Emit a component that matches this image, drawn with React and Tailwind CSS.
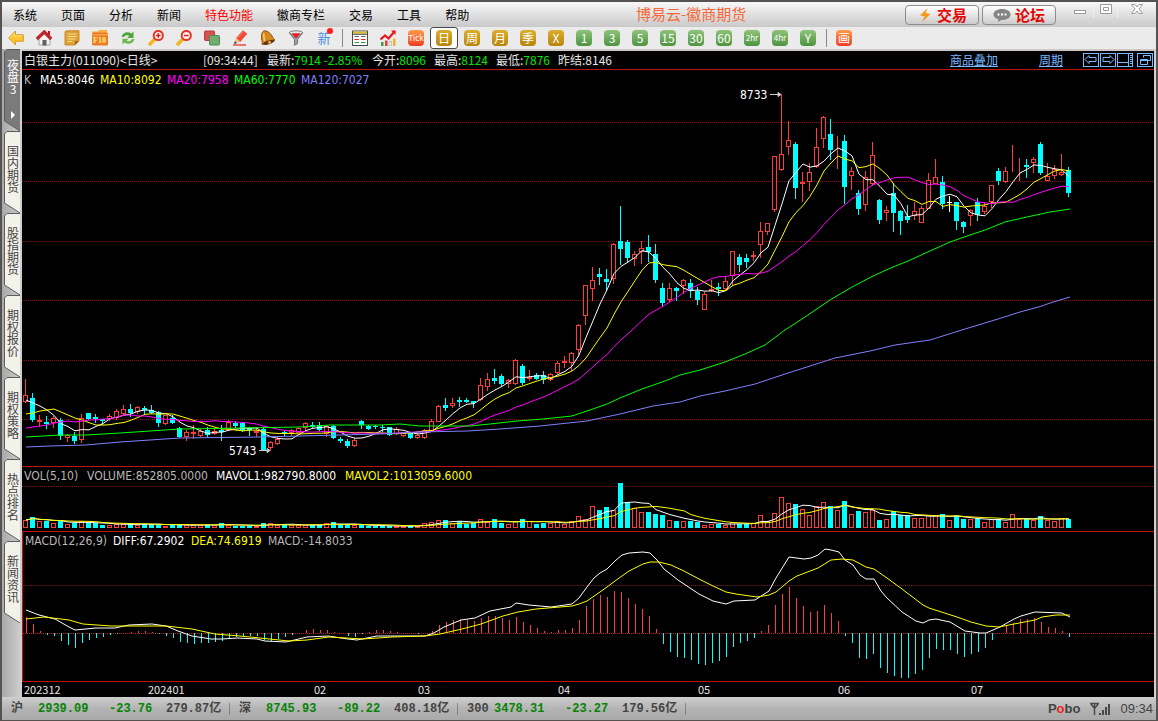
import React, { useState } from 'react';

const STEP = 7;
const FIRST_X = 25;

// [kind, high, bodyTop, bodyBottom, low] - kind: r = up, c = down, w = flat
const candles = [
  ['r', 379, 395, 401, 403], ['c', 393, 398, 420, 422], ['r', 415, 420, 421, 427], ['c', 416, 422, 424, 429], ['r', 416, 418, 422, 428],
  ['c', 418, 420, 436, 440], ['r', 434, 435, 437, 442], ['c', 432, 436, 441, 444], ['r', 414, 418, 439, 443], ['c', 413, 413, 419, 420],
  ['c', 414, 417, 419, 423], ['c', 419, 419, 421, 425], ['r', 414, 416, 418, 421], ['r', 409, 411, 417, 420], ['r', 405, 409, 413, 415],
  ['c', 404, 409, 413, 417], ['r', 406, 407, 411, 414], ['c', 406, 408, 410, 415], ['c', 405, 410, 413, 414], ['c', 411, 412, 423, 427],
  ['r', 415, 415, 423, 425], ['c', 415, 418, 423, 424], ['c', 427, 428, 437, 438], ['r', 430, 432, 436, 441], ['r', 425, 432, 433, 439],
  ['r', 429, 431, 435, 437], ['c', 427, 430, 435, 437], ['r', 429, 431, 433, 435], ['c', 425, 430, 432, 441], ['r', 420, 422, 429, 430],
  ['c', 421, 423, 426, 428], ['c', 422, 423, 431, 432], ['c', 427, 428, 430, 436], ['r', 427, 431, 432, 437], ['c', 427, 429, 450, 451],
  ['r', 441, 442, 447, 451], ['r', 437, 439, 443, 445], ['c', 431, 432, 433, 436], ['r', 429, 430, 432, 436], ['r', 427, 428, 432, 433],
  ['r', 422, 423, 427, 431], ['c', 422, 425, 427, 428], ['c', 422, 425, 430, 431], ['r', 425, 426, 433, 437], ['c', 425, 426, 438, 439],
  ['c', 437, 439, 441, 443], ['c', 439, 441, 446, 448], ['r', 438, 440, 445, 447], ['c', 420, 421, 425, 429], ['c', 425, 426, 429, 430],
  ['c', 425, 426, 427, 429], ['c', 425, 427, 428, 432], ['c', 427, 427, 435, 436], ['r', 427, 429, 433, 435], ['r', 433, 433, 435, 437],
  ['c', 433, 433, 438, 439], ['r', 433, 435, 437, 439], ['r', 429, 430, 437, 439], ['r', 419, 421, 430, 431], ['r', 405, 406, 421, 422],
  ['c', 398, 405, 408, 411], ['r', 398, 403, 405, 408], ['c', 397, 400, 402, 407], ['c', 398, 400, 402, 403], ['c', 401, 401, 403, 408],
  ['r', 378, 385, 399, 401], ['r', 373, 379, 386, 391], ['c', 369, 378, 381, 384], ['c', 374, 376, 384, 386], ['r', 379, 380, 383, 388],
  ['r', 359, 360, 383, 385], ['c', 364, 366, 383, 385], ['r', 370, 377, 378, 381], ['c', 373, 375, 379, 380], ['c', 371, 375, 380, 384],
  ['r', 373, 374, 379, 381], ['r', 361, 363, 372, 374], ['r', 356, 361, 362, 368], ['r', 352, 353, 362, 371], ['r', 324, 325, 349, 357],
  ['r', 285, 285, 315, 325], ['r', 267, 280, 288, 301], ['c', 268, 274, 277, 285], ['c', 269, 279, 282, 291], ['r', 243, 244, 278, 284],
  ['c', 206, 241, 249, 265], ['c', 240, 242, 258, 263], ['r', 251, 254, 258, 266], ['r', 241, 248, 251, 264], ['c', 235, 247, 252, 262],
  ['c', 244, 254, 280, 283], ['c', 283, 288, 303, 307], ['r', 283, 288, 299, 302], ['c', 287, 288, 291, 301], ['r', 279, 280, 285, 294],
  ['c', 279, 283, 291, 298], ['c', 287, 291, 300, 305], ['r', 292, 294, 309, 310], ['r', 280, 289, 290, 292], ['c', 283, 287, 289, 296],
  ['r', 276, 281, 288, 290], ['r', 251, 251, 275, 286], ['c', 254, 257, 265, 272], ['c', 254, 258, 262, 268], ['r', 251, 255, 256, 261],
  ['r', 222, 231, 244, 258], ['r', 223, 223, 231, 235], ['r', 156, 156, 209, 212], ['r', 94, 154, 169, 171], ['r', 121, 140, 146, 155],
  ['c', 142, 144, 188, 199], ['r', 172, 182, 183, 202], ['r', 163, 172, 181, 191], ['r', 128, 147, 166, 168], ['r', 116, 117, 138, 148],
  ['c', 119, 134, 150, 160], ['r', 136, 154, 154, 169], ['c', 135, 141, 187, 204], ['r', 167, 171, 175, 190], ['c', 190, 193, 209, 215],
  ['r', 171, 177, 204, 211], ['r', 142, 155, 183, 186], ['c', 199, 200, 220, 224], ['r', 206, 210, 212, 221], ['c', 183, 193, 213, 232],
  ['c', 210, 211, 221, 235], ['c', 205, 216, 220, 223], ['r', 202, 211, 215, 220], ['r', 206, 208, 222, 223], ['r', 173, 180, 208, 209],
  ['r', 159, 177, 183, 184], ['c', 176, 182, 204, 209], ['w', 196, 202, 203, 212], ['c', 202, 202, 221, 230], ['c', 221, 222, 227, 233],
  ['r', 209, 210, 215, 226], ['c', 198, 202, 215, 221], ['r', 202, 206, 211, 214], ['r', 185, 185, 201, 208], ['c', 168, 171, 181, 185],
  ['r', 167, 171, 181, 183], ['r', 145, 166, 166, 172], ['r', 158, 162, 162, 181], ['c', 159, 165, 167, 178], ['r', 157, 159, 162, 173],
  ['c', 142, 144, 173, 175], ['r', 163, 176, 180, 181], ['r', 165, 169, 175, 179], ['r', 154, 172, 174, 176], ['c', 167, 170, 193, 197],
];

const volumes = [
  7, 10, 6, 6, 4, 6, 3, 4, 6, 4, 4, 2, 2, 3, 3, 3, 2, 3, 3, 3, 1, 2, 2, 2, 2, 2, 2, 2, 4, 2,
  1, 1, 1, 1, 4, 4, 2, 2, 2, 2, 2, 2, 2, 4, 5, 2, 2, 2, 2, 1, 1, 1, 1, 1, 1, 1, 1, 4, 5, 7,
  7, 4, 6, 3, 4, 8, 5, 8, 4, 3, 6, 8, 6, 3, 4, 4, 6, 3, 6, 11, 8, 21, 17, 20, 17, 44, 25, 19, 15, 15,
  13, 12, 7, 6, 6, 6, 5, 2, 3, 3, 2, 5, 3, 3, 4, 12, 6, 14, 30, 24, 23, 18, 12, 21, 25, 21, 17, 26, 13, 16,
  15, 17, 7, 8, 16, 12, 12, 9, 9, 12, 12, 13, 7, 11, 8, 8, 8, 5, 8, 8, 5, 13, 8, 8, 7, 11, 7, 6, 9, 8,
];

const macd = [
  16, 9, 2, -2, -3, -8, -12, -15, -10, -7, -5, -4, -2, -1, 0, 1, 2, 2, 1, -1, -3, -5, -9, -10, -11, -10, -10, -9, -8, -5,
  -4, -3, -3, -3, -7, -8, -6, -4, -2, 0, 3, 4, 3, 3, 1, 0, -3, -4, -1, 1, 3, 3, 2, 1, 0, 0, -1, 0, 2, 8,
  11, 13, 14, 13, 12, 15, 17, 17, 15, 13, 16, 11, 8, 5, 2, 1, 3, 3, 5, 13, 27, 34, 38, 36, 42, 41, 35, 29, 24, 17,
  4, -11, -19, -24, -25, -27, -31, -32, -30, -28, -24, -14, -10, -8, -5, 2, 8, 28, 39, 46, 35, 27, 21, 22, 28, 20, 12, -3, -10, -25,
  -26, -21, -35, -40, -43, -45, -45, -41, -37, -25, -16, -17, -17, -21, -24, -21, -19, -15, -7, 0, 7, 10, 14, 14, 15, 11, 6, 5, 2, -4,
];

const ma60 =
  '26,437 60,435 86,435 120,433 150,431 180,429 240,428 300,427 330,425 380,425 400,424 420,426 470,426 490,424 517,421 543,419 572,416 587,411 607,404 620,398 642,389 665,381 680,375 700,370 725,362 745,354 765,345 785,330 802,319 830,300 852,287 873,276 893,267 908,261 930,251 950,242 970,235 985,230 1005,222 1027,217 1050,212 1070,209';
const ma120 =
  '26,447 50,446 86,445 120,442 150,440 180,438 260,437 300,436 340,435 380,434 420,432 467,431 500,429 540,426 587,421 620,414 653,406 680,402 700,396 725,391 755,384 785,374 810,366 835,358 870,351 895,345 930,340 965,329 998,319 1020,312 1042,306 1050,303 1070,297';
const diffLine =
  '26,610 39,615 55,619 69,627 75,630 96,628 115,628 129,625 152,624 166,626 178,631 192,636 211,639 222,639 237,638 257,639 265,641 286,642 307,637 328,636 348,639 357,640 377,636 425,636 434,633 444,627 461,620 475,618 490,611 511,607 516,603 529,605 551,607 572,604 579,598 587,587 594,578 600,573 607,569 615,561 622,555 629,553 643,552 650,553 657,560 664,569 678,580 684,584 699,594 713,601 726,604 734,601 755,600 769,591 776,578 789,557 804,559 811,558 818,555 825,549 831,550 839,552 845,560 853,565 860,575 866,579 874,579 881,591 887,598 902,612 916,621 923,623 929,620 936,619 950,622 965,631 980,633 986,633 1000,627 1014,619 1021,616 1035,612 1062,613 1070,617';
const deaLine =
  '26,619 44,617 69,620 83,624 111,626 166,626 192,629 215,634 240,636 289,641 307,640 329,637 363,639 392,637 425,636 440,634 462,629 481,624 503,616 518,612 536,609 572,606 579,604 587,601 600,592 607,587 615,581 629,571 643,564 650,562 659,562 671,565 684,571 699,579 713,586 726,592 736,594 757,597 769,595 776,592 789,581 797,576 818,568 831,560 842,559 853,560 866,567 874,569 887,578 902,589 923,605 929,608 957,617 971,622 986,626 999,627 1014,624 1035,620 1042,617 1056,615 1070,615';

// averages that depend on bars before the visible range
const seeds = {
  5: [400, 403, 406, 410],
  10: [414, 413, 411, 410, 409, 412, 415, 418, 420],
  20: [428, 427, 426, 425, 423, 422, 421, 422, 421, 420, 420, 419, 419, 417, 415, 415, 416, 416, 417],
};

const closes = candles.map((c) => (c[0] === 'c' ? c[3] : c[2]));

const average = (values, n, i) => {
  const part = values.slice(Math.max(0, i - n + 1), i + 1);
  return part.reduce((a, b) => a + b, 0) / part.length;
};

const maPoints = (n) =>
  closes.map((_, i) => `${FIRST_X + 1 + i * STEP},${seeds[n][i] ?? average(closes, n, i)}`).join(' ');

const volPoints = (n) =>
  volumes.map((_, i) => `${FIRST_X + 1 + i * STEP},${527 - average(volumes, n, i)}`).join(' ');

const kindColor = { r: '#ff3c3c', c: '#00ffff', w: '#ffffff' };

const GridLine = ({ y, color = '#8c0f0f' }) => (
  <line x1="0" x2="100%" y1={y + 0.5} y2={y + 0.5} stroke={color} strokeDasharray="1 1" shapeRendering="crispEdges" />
);

const Line = ({ points, color }) => <polyline points={points} fill="none" stroke={color} strokeWidth="1" />;

const Legend = ({ items, height }) => (
  <div className={`flex items-center pl-0.5 text-[12px] leading-4 whitespace-nowrap font-['DejaVu_Sans_Condensed','Noto_Sans',sans-serif] ${height}`}>
    {items.map(([text, color, width]) => (
      <span key={text} className={`${color} ${width}`}>
        {text}
      </span>
    ))}
  </div>
);

const PriceChart = () => (
  <svg className="block w-full h-[376px] overflow-visible">
    {[122, 181, 241, 300, 360, 419].map((y) => (
      <GridLine key={y} y={y - 90} />
    ))}
    <g transform="translate(-22 -90)">
      {candles.map(([kind, high, top, bottom, low], i) => {
        const x = FIRST_X + i * STEP;
        const color = kindColor[kind];
        return (
          <g key={i} shapeRendering="crispEdges" stroke={color}>
            <line x1={x + 0.5} x2={x + 0.5} y1={high} y2={low} />
            {kind === 'r' ? (
              <rect x={x - 1.5} y={top + 0.5} width="4" height={bottom - top} fill="#000000" />
            ) : (
              <rect x={x - 2} y={top} width="5" height={Math.max(1, bottom - top)} fill={color} stroke="none" />
            )}
          </g>
        );
      })}
      <Line points={maPoints(5)} color="#ffffff" />
      <Line points={maPoints(10)} color="#ffff00" />
      <Line points={maPoints(20)} color="#ff00ff" />
      <Line points={ma60} color="#00ff00" />
      <Line points={ma120} color="#8080ff" />
      <g className="fill-white text-[12px] font-['DejaVu_Sans_Condensed','Noto_Sans',sans-serif]">
        <text x="740" y="99">8733</text>
        <text x="229" y="455">5743</text>
      </g>
      <g stroke="#cccccc" fill="#cccccc">
        <path d="M770 94.5H781M778 92.5L781 94.5L778 96.5Z" />
        <path d="M259 450.5H270M267 448.5L270 450.5L267 452.5Z" />
      </g>
    </g>
  </svg>
);

const VolumeChart = () => (
  <svg className="block w-full h-[46px] overflow-visible">
    <GridLine y={1} />
    <g transform="translate(-22 -485)">
      {volumes.map((v, i) => {
        const x = FIRST_X + i * STEP;
        const up = candles[i][0] !== 'c';
        return up ? (
          <rect key={i} x={x - 1.5} y={527.5 - Math.max(v, 1)} width="4" height={Math.max(v, 1)} fill="#000000" stroke="#ff3c3c" shapeRendering="crispEdges" />
        ) : (
          <rect key={i} x={x - 2} y={527 - v} width="5" height={v + 1} fill="#00ffff" shapeRendering="crispEdges" />
        );
      })}
      <Line points={volPoints(5)} color="#ffffff" />
      <Line points={volPoints(10)} color="#ffff00" />
    </g>
  </svg>
);

const MacdChart = () => (
  <svg className="block w-full h-[131px] overflow-visible">
    <GridLine y={35} />
    <GridLine y={83} color="#d01010" />
    <g transform="translate(-23 -550)">
      {macd.map((m, i) => {
        const x = FIRST_X + 1.5 + i * STEP;
        return m === 0 ? null : (
          <line key={i} x1={x} x2={x} y1="633" y2={633 - m} stroke={m > 0 ? '#ff3c3c' : '#00ffff'} shapeRendering="crispEdges" />
        );
      })}
      <Line points={diffLine} color="#ffffff" />
      <Line points={deaLine} color="#ffff00" />
    </g>
  </svg>
);

/* Toolbar icons */
const Icon = ({ children }) => (
  <svg className="block w-4 h-4" viewBox="0 0 16 16" fill="none">
    {children}
  </svg>
);

const BackIcon = () => (
  <Icon>
    <path d="M.7 8L7.500 1v3.800h7.800v6.400H7.500V15z" fill="#fbc62f" stroke="#d9971c" />
    <path d="M2.500 7.800L6.500 3.500v2.500h7.800" stroke="#ffe58a" />
  </Icon>
);

const HomeIcon = () => (
  <Icon>
    <path d="M3 8v7h11V8L8.500 3z" fill="#f2f2f2" stroke="#a5a5a5" />
    <path d="M12 1h2v5h-2z" fill="#a81c22" />
    <path d="M.8 9L8.300 2l7 7" stroke="#c0262e" strokeWidth="3.400" />
    <path d="M6.500 10h4v5.500h-4z" fill="#5f6063" />
  </Icon>
);

const NoteIcon = () => (
  <Icon>
    <path d="M1 2.500C1 1.200 2 .8 3 .8h12v10L11 15H1z" fill="#dfa035" stroke="#cf8b22" />
    <path d="M3.500 4h9M3.500 6.500h9M3.500 9h8M3.500 11.500h5" stroke="#f9dc8f" />
    <path d="M11 15v-4h4z" fill="#a86a12" />
  </Icon>
);

const F10Icon = () => (
  <Icon>
    <path d="M0 3V1.500h6L7 0h8v3z" fill="#f5b23c" />
    <rect x="0" y="2.500" width="16" height="13" rx="1.500" fill="#ee7a27" />
    <path d="M0 4h16v1.500H0z" fill="#f9a04d" />
    <text x="1" y="12.500" className="fill-yellow-200 text-[8px] font-bold font-['Liberation_Serif',serif]">F10</text>
  </Icon>
);

const RefreshIcon = () => (
  <Icon>
    <path d="M1.500 7C2.500 2.500 7.500 1 11.500 3.500L13.500 1.500V8H7.200L9.300 5.800C7.300 4.700 5 5.200 4 7z" fill="#4ea63a" />
    <path d="M14.500 9c-1 4.500-6 6-10 3.500L2.500 14.500V8.800h6L6.700 10.700c2 1.100 4.300.5 5.300-1.700z" fill="#67ba4d" />
  </Icon>
);

const MagnifierIcon = ({ plus }) => (
  <Icon>
    <path d="M6.500 9.500L2 14" stroke="#f4b51d" strokeWidth="3.600" strokeLinecap="round" />
    <circle cx="10.300" cy="5.500" r="4.600" fill="#fff2ee" stroke="#e2372a" strokeWidth="2" />
    <path d="M8 5.500h4.600" stroke="#d3231c" strokeWidth="1.500" />
    {plus && <path d="M10.300 3.200v4.600" stroke="#d3231c" strokeWidth="1.500" />}
  </Icon>
);

const CopyIcon = () => (
  <Icon>
    <rect x=".5" y="1" width="10" height="9.500" rx="1" fill="#d8504e" stroke="#b93a3a" />
    <rect x="5.500" y="5.500" width="10" height="9.500" rx="1" fill="#6fae70" stroke="#4f8a52" />
  </Icon>
);

const PenIcon = () => (
  <Icon>
    <path d="M1 15h13" stroke="#e2372a" strokeWidth="1.300" />
    <path d="M4 8L11 .3l4.200 3.400L8.200 12z" fill="#ef4a34" />
    <path d="M5.500 8L11.500 1.500" stroke="#ff8a70" />
    <path d="M4 8l4.200 4L2 14z" fill="#efc28c" />
    <path d="M2 14l.9-2.700 2 1.800z" fill="#333333" />
  </Icon>
);

const BellIcon = () => (
  <Icon>
    <path d="M3 1.500C5-.5 9 2 11 4.500c1.500 2 1.500 3.500 4 5.500L2 14.500c1-3-1-5-.5-8C1.700 4 2 2.500 3 1.500z" fill="#d58a1f" stroke="#8c4f12" />
    <path d="M4 3.500C3 6 4.500 8.500 4.500 11" stroke="#ffd36b" strokeWidth="1.500" />
    <ellipse cx="8.800" cy="12.300" rx="6" ry="2" transform="rotate(-18 8.800 12.300)" fill="#6b3411" />
    <circle cx="9.500" cy="12.300" r="1.500" fill="#f0b044" />
  </Icon>
);

const FilterIcon = () => (
  <Icon>
    <path d="M1.500 3l5 6.500v5.700l3-1.500V9.500l5-6.500z" fill="#9da1a5" stroke="#6f7376" />
    <ellipse cx="8" cy="2.800" rx="6.700" ry="2" fill="#e6e6e6" stroke="#77797b" />
    <path d="M3.500 3.300h9L8.800 8H7.200z" fill="#de2527" />
  </Icon>
);

const NewIcon = () => (
  <span className="relative block text-[13px] leading-4 text-[#4a90e2]">
    新<span className="absolute -top-0.5 -right-0.5 w-1.5 h-1.5 rounded-full bg-[#ff1c1c]" />
  </span>
);

const TableIcon = () => (
  <Icon>
    <rect x=".5" y="1" width="15" height="14.500" fill="#ffffff" stroke="#4c4c4c" />
    <path d="M1 1.500h14v2.300H1z" fill="#d8c33a" />
    <path d="M1 4.300h14" stroke="#4c4c4c" />
    <path d="M2.500 6.500h4.500M9 6.500h4.500" stroke="#6d6d6d" />
    <path d="M2.500 9.500h4.500M9 9.500h4.500" stroke="#e22b2b" />
    <path d="M2.500 12.500h4.500M9 12.500h4.500" stroke="#2a9d3b" />
  </Icon>
);

const TrendIcon = () => (
  <Icon>
    <path d="M1 12h2.500v4H1z" fill="#3fa145" />
    <path d="M5 10.500h2.500V16H5z" fill="#d64532" />
    <path d="M9 11.500h2.500V16H9z" fill="#eeeeee" stroke="#999999" strokeWidth=".5" />
    <path d="M13 8.500h2.500V16H13z" fill="#f0b32d" />
    <path d="M.5 9.500L5 5.500l3.500 3L15 1" stroke="#e3191c" strokeWidth="2.200" />
    <path d="M11 .5h4.500V5z" fill="#e3191c" />
  </Icon>
);

const badgeStyles = {
  gold: 'from-[#dcae2c] to-[#b88508]',
  green: 'from-[#8fc37a] to-[#4c9440]',
  orange: 'from-[#ff9a4a] to-[#ee3a24]',
};

const Badge = ({ color, children, small }) => (
  <span className={`flex items-center justify-center w-4 h-4 rounded-sm bg-linear-to-b text-white leading-4 ${badgeStyles[color]} ${small ? 'text-[8px]' : 'text-[12px]'}`}>
    {children}
  </span>
);

const ToolButton = ({ label, children, active, onClick }) => (
  <button
    type="button"
    aria-label={label}
    onClick={onClick}
    className={`flex items-center justify-center w-7 h-[22px] shrink-0 ${active ? 'rounded-[3px] bg-white border border-[#4a4a4a]' : ''}`}
  >
    {children}
  </button>
);

const Separator = () => (
  <span className="flex justify-center w-2 shrink-0">
    <span className="w-px h-[18px] bg-[#8a8a8a]" />
  </span>
);

const leftTools = [
  ['Back', <BackIcon />],
  ['Home', <HomeIcon />],
  ['Note', <NoteIcon />],
  ['F10', <F10Icon />],
  ['Refresh', <RefreshIcon />],
  ['Zoom in', <MagnifierIcon plus />],
  ['Zoom out', <MagnifierIcon />],
  ['Overlay', <CopyIcon />],
  ['Draw', <PenIcon />],
  ['Alert', <BellIcon />],
  ['Filter', <FilterIcon />],
  ['New', <NewIcon />],
];

const periods = [
  ['Tick', 'orange'],
  ['日', 'gold'],
  ['周', 'gold'],
  ['月', 'gold'],
  ['季', 'gold'],
  ['X', 'gold'],
  ['1', 'green'],
  ['3', 'green'],
  ['5', 'green'],
  ['15', 'green'],
  ['30', 'green'],
  ['60', 'green'],
  ['2hr', 'green'],
  ['4hr', 'green'],
  ['Y', 'green'],
];

const menus = ['系统', '页面', '分析', '新闻', '特色功能', '徽商专栏', '交易', '工具', '帮助'];

const MenuBar = () => (
  <header className="flex items-center h-[25px] bg-linear-to-b from-[#f8f8f8] to-[#c9c9c9] text-[12px] text-black">
    <nav className="flex gap-6 pl-[11px]">
      {menus.map((m) => (
        <button key={m} type="button" className={m === '特色功能' ? 'text-[#ff0000]' : ''}>
          {m}
        </button>
      ))}
    </nav>
    <h1 className="flex-1 pl-2 text-center text-[15px] text-[#f4693c]">博易云-徽商期货</h1>
    <div className="flex gap-[3px]">
      <button type="button" className="flex items-center justify-center gap-1 w-[74px] h-5 rounded border border-[#8d8d8d] bg-linear-to-b from-white to-[#cccccc] text-[15px] leading-4 font-bold text-[#e00808]">
        <svg className="w-4 h-4" viewBox="0 0 16 16">
          <path d="M10.500 1L3 8.500l4.500.8L5 15l8.500-8-4.800-1z" fill="#f39a1e" />
        </svg>
        交易
      </button>
      <button type="button" className="flex items-center justify-center gap-1 w-[74px] h-5 rounded border border-[#8d8d8d] bg-linear-to-b from-white to-[#cccccc] text-[15px] leading-4 font-bold text-[#e00808]">
        <svg className="w-[18px] h-4" viewBox="0 0 18 16">
          <path d="M9 2c5 0 8.500 2.300 8.500 5.500S14 13 9 13l-1 0-3 2.300.3-3C2.500 11.500.5 9.700.5 7.500.5 4.300 4 2 9 2z" fill="#858585" />
          <path d="M4.500 6.500h2v2h-2zM8 6.500h2v2H8zM11.500 6.500h2v2h-2z" fill="#ffffff" />
        </svg>
        论坛
      </button>
    </div>
    <div className="flex self-start pl-2.5 text-[#9a9a9a]">
      <button type="button" aria-label="Minimize" className="flex justify-center w-7 h-4 border-r border-[#f2f2f2]">
        <svg className="w-4 h-4" viewBox="0 0 16 16"><rect x="2.500" y="8.500" width="11" height="3" fill="#fff" stroke="currentColor" /></svg>
      </button>
      <button type="button" aria-label="Restore" className="flex justify-center w-6 h-4 border-r border-[#f2f2f2]">
        <svg className="w-4 h-4" viewBox="0 0 16 16"><path d="M2.500 2.500h11v9h-11zM5.500 5.500h5v3h-5z" fill="#fff" stroke="currentColor" /></svg>
      </button>
      <button type="button" aria-label="Close" className="flex justify-center w-[38px] h-4">
        <svg className="w-4 h-4" viewBox="0 0 16 16"><path d="M2.500 2.500h3.500L8 5l2-2.500h3.500L10 7l3.500 4.500H10L8 9l-2 2.500H2.500L6 7z" fill="#fff" stroke="currentColor" /></svg>
      </button>
    </div>
  </header>
);

const Toolbar = () => {
  const [period, setPeriod] = useState('日');

  return (
    <div className="flex items-center h-6 bg-[#ebebeb] border-b-2 border-[#cdc8c6] overflow-hidden">
      {leftTools.map(([label, icon]) => (
        <ToolButton key={label} label={label}>{icon}</ToolButton>
      ))}
      <Separator />
      <ToolButton label="Quote table"><TableIcon /></ToolButton>
      <ToolButton label="Trend"><TrendIcon /></ToolButton>
      {periods.map(([name, color]) => (
        <ToolButton key={name} label={name} active={name === period} onClick={() => setPeriod(name)}>
          <Badge color={color} small={name.length > 2}>{name}</Badge>
        </ToolButton>
      ))}
      <Separator />
      <ToolButton label="画"><Badge color="orange">画</Badge></ToolButton>
    </div>
  );
};

const sideTabs = ['夜盘3', '国内期货', '股指期货', '期权报价', '期权策略', '热点排名', '新闻资讯'];

const SideTab = ({ name, active }) => (
  <button type="button" className={`relative block w-4 h-[82px] ${active ? 'text-white' : 'text-[#444444]'}`}>
    <svg className="absolute inset-0 w-full h-full" viewBox="0 0 16 82" preserveAspectRatio="none">
      <path d="M16 .5H3L.5 3V72L16 82" fill={active ? '#7b7b7b' : '#f2f2ea'} stroke="#5c5c5c" />
      {active && <path d="M7 62l4 4-4 4z" fill="#ffffff" />}
    </svg>
    <span className={`absolute left-[3px] w-3 text-[12px] leading-3 text-center break-all ${active ? 'top-2.5' : 'top-3.5'}`}>
      {name}
    </span>
  </button>
);

const HeaderButton = ({ label, children }) => (
  <button type="button" aria-label={label} className="w-4 h-3.5 border border-[#7ab8ff] text-[#7ab8ff]">
    <svg className="block w-3.5 h-3" viewBox="0 0 14 12" fill="none" stroke="currentColor">
      {children}
    </svg>
  </button>
);

const quotes = [
  ['最新:', '7914 -2.85%', 'w-[105px]'],
  ['今开:', '8096', 'w-[62px]'],
  ['最高:', '8124', 'w-[62px]'],
  ['最低:', '7876', 'w-[62px]'],
];

const QuoteHeader = () => (
  <div className="flex items-center h-[19px] pl-0.5 pr-px border-b border-[#c01408] text-[12px] leading-4 text-[#e6e6e6] whitespace-nowrap">
    <span className="w-[179px]">白银主力(011090)&lt;日线&gt;</span>
    <span className="w-16">[09:34:44]</span>
    {quotes.map(([label, value, width]) => (
      <span key={label} className={width}>
        {label}
        <span className="text-[#00e600]">{value}</span>
      </span>
    ))}
    <span>昨结:8146</span>
    <div className="flex items-center ml-auto text-[#7ab8ff]">
      <a href="#overlay" className="underline mr-[41px]">商品叠加</a>
      <a href="#period" className="underline mr-5">周期</a>
      <div className="flex gap-px mr-1">
        <HeaderButton label="Previous"><path d="M1 5.500l4-4v2h7v4H5v2z" /></HeaderButton>
        <HeaderButton label="Next"><path d="M13 5.500l-4-4v2H2v4h7v2z" /></HeaderButton>
        <HeaderButton label="Side panel"><path d="M0 8.500h10M10.500 0v12M12 1.500h2M12 3.500h2M12 5.500h2M12 7.500h2M12 9.500h2" /></HeaderButton>
      </div>
      <HeaderButton label="Float"><path d="M5.500 3.500v-2h7v5h-3M5.500 1.500h7M2.500 5.500h7v5h-7zM2.500 6.500h7" /></HeaderButton>
    </div>
  </div>
);

const months = [
  ['202312', 'w-[124px]'],
  ['202401', 'w-[166px]'],
  ['02', 'w-[104px]'],
  ['03', 'w-[140px]'],
  ['04', 'w-[140px]'],
  ['05', 'w-[140px]'],
  ['06', 'w-[133px]'],
  ['07', ''],
];

const indices = [
  ['沪', '2939.09', '-23.76', '279.87亿'],
  ['深', '8745.93', '-89.22', '408.18亿'],
  ['300', '3478.31', '-23.27', '179.56亿'],
];

const StatusBar = () => (
  <footer className="flex items-center h-[23px] pl-[9px] pr-[3px] bg-linear-to-b from-[#cecece] via-[#b4b4b4] to-[#a9a9a9] text-[12px] font-bold text-[#444444] whitespace-nowrap font-['Liberation_Mono','Noto_Sans_CJK_SC',monospace]">
    {indices.map(([name, value, change, amount]) => (
      <div key={name} className="flex items-center">
        <span className="w-[27px]">{name}</span>
        <span className="w-[71px] text-[#078307]">{value}</span>
        <span className="w-[57px] text-[#078307]">{change}</span>
        <span className="w-[63px]">{amount}</span>
        <span className="w-px h-3 mr-[9px] bg-[#858585]" />
      </div>
    ))}
    <div className="flex items-center ml-auto text-[13px] font-['Liberation_Sans',sans-serif]">
      <span className="mr-2.5">P<span className="text-[#ee2222]">o</span>bo</span>
      <svg className="w-5 h-3.5 mr-2.5" viewBox="0 0 20 14" fill="none" stroke="#4a4a4a">
        <path d="M0 1.500h9M4.500 2v11M.5 1.500l4 5 4-5" strokeWidth="1.500" />
        <path d="M10 11v2M13 8v5M16 5v8M19 2v11" strokeWidth="2" />
      </svg>
      <span className="font-normal">09:34</span>
    </div>
  </footer>
);

const App = () => (
  <div className="flex flex-col min-h-screen border-2 border-b border-[#555252] bg-[#c6c6c6] font-['Noto_Sans_CJK_SC',sans-serif]">
    <MenuBar />
    <Toolbar />
    <div className="flex flex-1">
      <aside className="w-5 shrink-0 -mt-0.5 pl-0.5 bg-linear-to-r from-[#a9a9a9] to-[#d2d0d0]">
        {sideTabs.map((name, i) => (
          <SideTab key={name} name={name} active={i === 0} />
        ))}
      </aside>

      <main className="flex-1 min-w-0 border-r-2 border-[#d4cecb] bg-black">
        <QuoteHeader />

        <section className="border-b border-[#c01408]">
          <Legend
            height="h-5"
            items={[
              ['K', 'text-[#b8b8b8]', 'w-4'],
              ['MA5:8046', 'text-white', 'w-[60px]'],
              ['MA10:8092', 'text-[#ffff00]', 'w-[67px]'],
              ['MA20:7958', 'text-[#ff00ff]', 'w-[67px]'],
              ['MA60:7770', 'text-[#00ff00]', 'w-[67px]'],
              ['MA120:7027', 'text-[#8080ff]', ''],
            ]}
          />
          <PriceChart />
        </section>

        <section className="border-b border-[#c01408]">
          <Legend
            height="h-[18px]"
            items={[
              ['VOL(5,10)', 'text-[#b8b8b8]', 'w-[63px]'],
              ['VOLUME:852805.0000', 'text-[#b8b8b8]', 'w-[129px]'],
              ['MAVOL1:982790.8000', 'text-white', 'w-[129px]'],
              ['MAVOL2:1013059.6000', 'text-[#ffff00]', ''],
            ]}
          />
          <VolumeChart />
        </section>

        <section className="border-b border-l border-[#c01408]">
          <Legend
            height="h-[18px]"
            items={[
              ['MACD(12,26,9)', 'text-[#b8b8b8]', 'w-[88px]'],
              ['DIFF:67.2902', 'text-white', 'w-[78px]'],
              ['DEA:74.6919', 'text-[#ffff00]', 'w-[77px]'],
              ['MACD:-14.8033', 'text-[#b8b8b8]', ''],
            ]}
          />
          <MacdChart />
        </section>

        <div className="flex items-center h-[15px] pl-0.5 text-[11px] leading-[15px] text-[#e6e6e6]">
          {months.map(([label, width]) => (
            <span key={label} className={width}>{label}</span>
          ))}
        </div>
      </main>
    </div>
    <StatusBar />
  </div>
);

export default App;
